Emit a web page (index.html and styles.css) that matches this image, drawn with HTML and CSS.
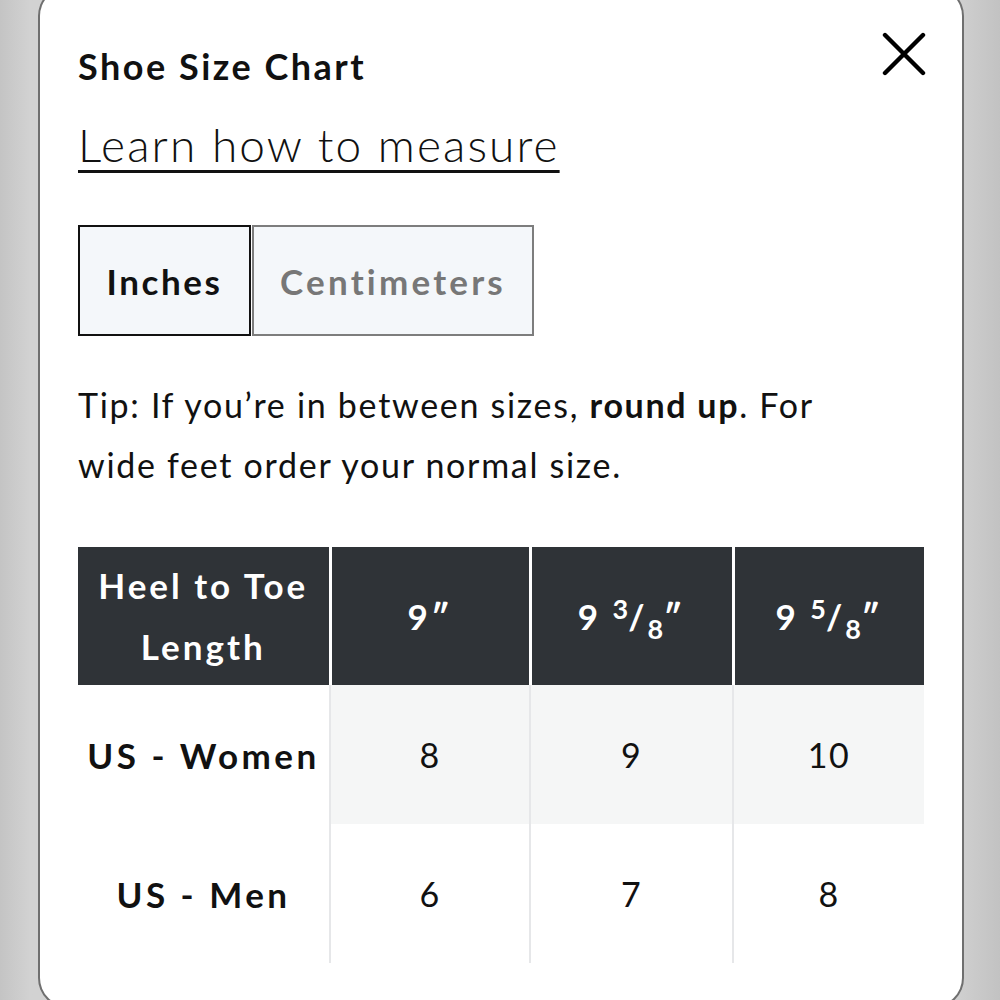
FILE: index.html
```html
<!DOCTYPE html>
<html lang="en">
<head>
    <meta charset="UTF-8">
    <meta name="viewport" content="width=device-width, initial-scale=1.0">
    <title>Shoe Size Chart</title>
    <link rel="stylesheet" href="styles.css">
</head>
<body>
    <div class="modal">
        <div class="modal-header">
            <h2>Shoe Size Chart</h2>
            <button class="close-btn" aria-label="Close">
                <svg width="44" height="44" viewBox="0 0 44 44">
                    <path d="M3 3 L41 41 M41 3 L3 41" stroke="#000" stroke-width="4.4" stroke-linecap="round" fill="none"/>
                </svg>
            </button>
        </div>

        <a class="measure-link" href="#">Learn how to measure</a>

        <!-- unit switch -->
        <div class="unit-toggle">
            <button class="unit-btn active">Inches</button>
            <button class="unit-btn">Centimeters</button>
        </div>

        <p class="tip">Tip: If you’re in between sizes, <strong>round up</strong>. For wide feet order your normal size.</p>

        <table class="size-table">
            <colgroup>
                <col class="col-label">
                <col class="col-a">
                <col class="col-b">
                <col class="col-c">
            </colgroup>
            <thead>
                <tr>
                    <th>Heel to Toe<br>Length</th>
                    <th>9″</th>
                    <th>9 <span class="frac"><sup>3</sup>/<sub>8</sub></span>″</th>
                    <th>9 <span class="frac"><sup>5</sup>/<sub>8</sub></span>″</th>
                </tr>
            </thead>
            <tbody>
                <tr class="shaded">
                    <td class="row-label">US - Women</td>
                    <td>8</td>
                    <td>9</td>
                    <td>10</td>
                </tr>
                <tr>
                    <td class="row-label">US - Men</td>
                    <td>6</td>
                    <td>7</td>
                    <td>8</td>
                </tr>
            </tbody>
        </table>
    </div>
</body>
</html>
```

FILE: styles.css
```css
html, body {
    margin: 0;
    height: 100%;
    overflow: hidden;
}
body {
    font-family: Lato, "Open Sans", sans-serif;
    color: #111;
    background: linear-gradient(90deg, #c4c4c4 0%, #d2d2d2 3%, #cfcfcf 96%, #c2c2c2 100%);
}
.modal {
    box-sizing: border-box;
    margin: -12px 38px 0 40px;
    height: 1018px;
    background: #fff;
    border-radius: 28px;
    box-shadow: 0 0 0 2px #6f6f6f;
    padding: 0 38px 0 38px;
}
.modal-header {
    display: flex;
    justify-content: space-between;
    align-items: flex-start;
    padding-top: 56px;
}
.modal-header h2 {
    margin: 0;
    font-size: 36px;
    font-weight: 700;
    line-height: 44px;
    letter-spacing: 2.5px;
}
.close-btn {
    background: none;
    border: none;
    padding: 0;
    margin: -12px -2px 0 0;
    cursor: pointer;
}
.measure-link {
    display: inline-block;
    margin-top: 29px;
    font-size: 46px;
    font-weight: 300;
    color: #111;
    letter-spacing: 2.1px;
    text-decoration: underline;
    text-decoration-thickness: 3px;
    text-underline-offset: 8px;
    line-height: 56px;
}
.unit-toggle {
    display: flex;
    margin-top: 52px;
}
.unit-btn {
    font-family: inherit;
    font-size: 35px;
    font-weight: 700;
    letter-spacing: 3.2px;
    height: 111px;
    background: #f4f7fa;
    border: 2px solid #7d7d7d;
    color: #777;
    padding: 0;
    cursor: pointer;
}
.unit-btn.active {
    border-color: #111;
    color: #111;
    width: 173px;
    letter-spacing: 2.6px;
}
.unit-btn + .unit-btn {
    margin-left: 1px;
    width: 282px;
}
.tip {
    margin: 39px 0 0;
    font-size: 34px;
    line-height: 60px;
    letter-spacing: 1.7px;
    max-width: 800px;
}
.tip strong {
    font-weight: 700;
}
.size-table {
    margin-top: 52px;
    width: 846px;
    border-collapse: collapse;
    table-layout: fixed;
    font-size: 34px;
}
.col-label { width: 252px; }
.col-a { width: 200px; }
.col-b { width: 203px; }
.col-c { width: 191px; }
.size-table th {
    background: #2f3337;
    color: #fff;
    font-weight: 700;
    font-size: 35px;
    letter-spacing: 3px;
    height: 138px;
    line-height: 61px;
    padding: 0;
    text-align: center;
    border-left: 3px solid #fff;
}
.size-table th:first-child {
    border-left: none;
}
.frac sup, .frac sub {
    font-size: 27px;
    line-height: 0;
    letter-spacing: 0;
}
.frac sup { vertical-align: 11px; }
.frac sub { vertical-align: -9px; }
.size-table td {
    height: 139px;
    padding: 0;
    text-align: center;
    font-weight: 400;
    letter-spacing: 1.5px;
    border-left: 2px solid #e6e7e9;
}
.size-table td.row-label {
    border-left: none;
    background: #fff;
    font-weight: 700;
    font-size: 35px;
    letter-spacing: 3.5px;
}
.size-table tr.shaded td {
    background: #f5f6f6;
}
.size-table tr.shaded td.row-label {
    background: #fff;
}
```
